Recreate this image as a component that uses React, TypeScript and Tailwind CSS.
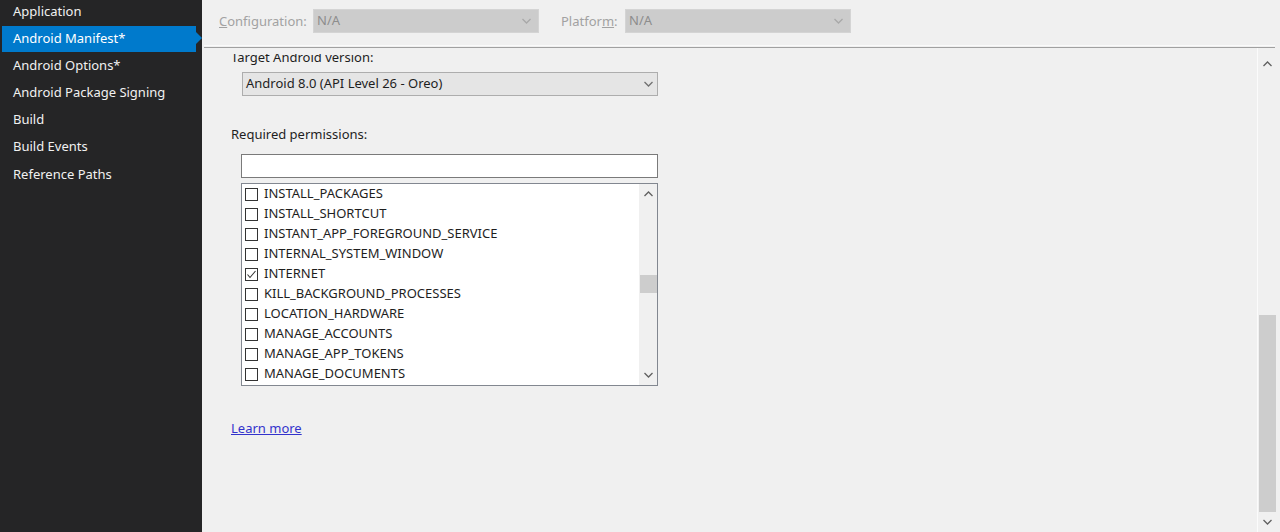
import React from "react";

const FONT = { fontFamily: '"Segoe UI", "Noto Sans", "Liberation Sans", sans-serif' };

const navItems = [
  "Application",
  "Android Manifest*",
  "Android Options*",
  "Android Package Signing",
  "Build",
  "Build Events",
  "Reference Paths",
];

const permissions = [
  { name: "INSTALL_PACKAGES", checked: false },
  { name: "INSTALL_SHORTCUT", checked: false },
  { name: "INSTANT_APP_FOREGROUND_SERVICE", checked: false },
  { name: "INTERNAL_SYSTEM_WINDOW", checked: false },
  { name: "INTERNET", checked: true },
  { name: "KILL_BACKGROUND_PROCESSES", checked: false },
  { name: "LOCATION_HARDWARE", checked: false },
  { name: "MANAGE_ACCOUNTS", checked: false },
  { name: "MANAGE_APP_TOKENS", checked: false },
  { name: "MANAGE_DOCUMENTS", checked: false },
];

function Chevron({ color = "#606060", up = false }: { color?: string; up?: boolean }) {
  return (
    <svg width="9" height="6" viewBox="0 0 9 6" className="block">
      <path
        d={up ? "M0.5 5 L4.5 1 L8.5 5" : "M0.5 1 L4.5 5 L8.5 1"}
        fill="none"
        stroke={color}
        strokeWidth="1.3"
      />
    </svg>
  );
}

function Checkbox({ checked }: { checked: boolean }) {
  return (
    <div className="w-[13px] h-[13px] border border-[#333333] bg-white flex items-center justify-center shrink-0">
      {checked && (
        <svg width="11" height="11" viewBox="0 0 11 11">
          <path d="M1.5 5.5 L4 8.5 L9.5 2" fill="none" stroke="#333333" strokeWidth="1.1" />
        </svg>
      )}
    </div>
  );
}

function DisabledSelect() {
  return (
    <div className="w-[226px] h-[24px] bg-[#cccccc] border border-[#d4d4d4] flex items-center justify-between pl-[3px] pr-[7px]">
      <span className="text-[#8d8d8d] text-[13px]">N/A</span>
      <Chevron color="#a8a8a8" />
    </div>
  );
}

export default function App() {
  return (
    <div className="w-[1280px] h-[532px] flex overflow-hidden bg-[#f0f0f0] text-[13px]" style={FONT}>
      {/* Sidebar */}
      <div className="w-[202px] h-full bg-[#252526] shrink-0 flex flex-col">
        <div className="-mt-[2px] flex flex-col">
          {navItems.map((item, i) => {
            const sel = i === 1;
            return (
              <div key={item} className={`relative flex items-center ${i >= 5 ? "h-[27.5px]" : "h-[27px]"}`}>
                {sel ? (
                  <>
                    <div className="ml-[2px] w-[194px] h-[26px] bg-[#007acc] flex items-center pl-[11px] text-white text-[13px]">
                      {item}
                    </div>
                    <div className="absolute left-[196px] top-[7px] w-0 h-0 border-y-[6px] border-y-transparent border-l-[6px] border-l-[#007acc]" />
                  </>
                ) : (
                  <div className="pl-[13px] text-[#f1f1f1] text-[13px]">{item}</div>
                )}
              </div>
            );
          })}
        </div>
      </div>

      {/* Main */}
      <div className="flex-1 flex flex-col min-w-0">
        {/* Top config bar */}
        <div className="h-[45px] flex items-start pt-[9px] shrink-0">
          <span className="ml-[17px] mt-[3px] w-[94px] text-[#a2a2a2]">
            <span className="underline">C</span>onfiguration:
          </span>
          <DisabledSelect />
          <span className="ml-[22px] mt-[3px] w-[64px] text-[#a2a2a2]">
            Platfor<span className="underline">m</span>:
          </span>
          <DisabledSelect />
        </div>
        {/* Separator */}
        <div className="h-[1px] bg-[#fafafa] mr-[5px] ml-[2px]" />
        <div className="h-[1px] bg-[#a0a0a0] mr-[5px] ml-[2px] mt-[1px]" />

        {/* Content with scrollbar */}
        <div className="flex-1 flex min-h-0">
          <div className="flex-1 flex flex-col min-h-0">
            <div className="h-[6px] shrink-0" />
            <div className="flex-1 overflow-hidden">
              <div className="-mt-[5px] pl-[29px] flex flex-col">
                <div className="h-[17px] leading-[17px] text-[#1e1e1e]">Target Android version:</div>
                <div className="mt-[6px] ml-[11px] w-[416px] h-[24px] bg-[#e5e5e5] border border-[#adadad] flex items-center justify-between pl-[3px] pr-[4px]">
                  <span className="text-[#1e1e1e]">Android 8.0 (API Level 26 - Oreo)</span>
                  <Chevron color="#707070" />
                </div>

                <div className="mt-[30px] h-[17px] leading-[17px] text-[#1e1e1e]">Required permissions:</div>
                <div className="mt-[11px] ml-[10px] w-[417px] h-[24px] bg-white border border-[#7a7a7a]" />

                <div className="mt-[5px] ml-[10px] w-[417px] h-[203px] bg-white border border-[#828790] flex">
                  <div className="flex-1 flex flex-col">
                    {permissions.map((p) => (
                      <div key={p.name} className="h-[20px] flex items-center pl-[3px] gap-[6px]">
                        <Checkbox checked={p.checked} />
                        <span className="text-[#1e1e1e]">{p.name}</span>
                      </div>
                    ))}
                  </div>
                  <div className="w-[18px] bg-[#f0f0f0] flex flex-col items-center">
                    <div className="h-[20px] flex items-center justify-center">
                      <Chevron up color="#606060" />
                    </div>
                    <div className="mt-[71px] w-[17px] h-[18px] bg-[#cdcdcd]" />
                    <div className="flex-1" />
                    <div className="h-[20px] flex items-center justify-center">
                      <Chevron color="#606060" />
                    </div>
                  </div>
                </div>

                <div className="mt-[33px] h-[18px]">
                  <a href="#" className="text-[#3333cc] underline">Learn more</a>
                </div>
              </div>
            </div>
          </div>

          {/* Main scrollbar */}
          <div className="w-[19px] mr-[4px] bg-[#f0f0f0] border-l border-[#fbfbfb] flex flex-col items-center">
            <div className="h-[28px] flex items-center justify-center pt-[4px]">
              <Chevron up color="#606060" />
            </div>
            <div className="flex-1" />
            <div className="w-[17px] h-[197px] bg-[#cdcdcd]" />
            <div className="h-[20px] flex items-center justify-center">
              <Chevron color="#606060" />
            </div>
          </div>
        </div>
      </div>
    </div>
  );
}
